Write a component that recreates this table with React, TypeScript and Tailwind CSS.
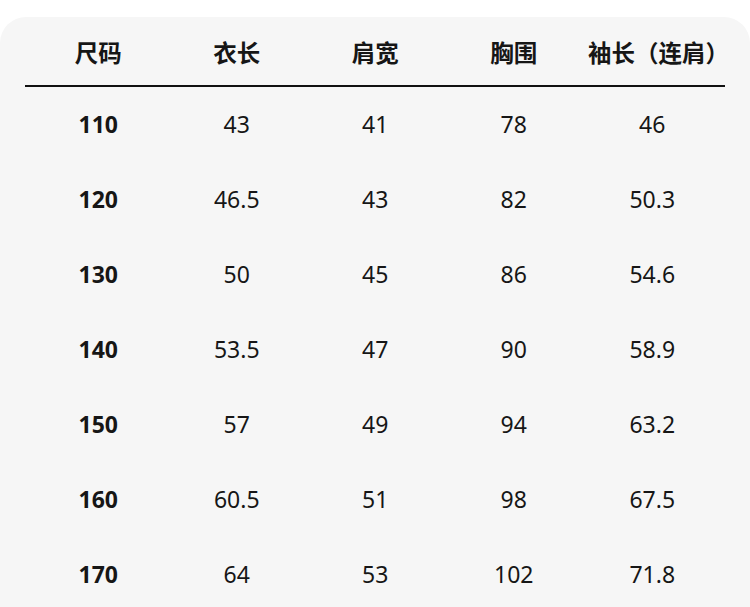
import React from "react";

const headers = ["尺码", "衣长", "肩宽", "胸围", "袖长（连肩）"];
const rows = [
  ["110", "43", "41", "78", "46"],
  ["120", "46.5", "43", "82", "50.3"],
  ["130", "50", "45", "86", "54.6"],
  ["140", "53.5", "47", "90", "58.9"],
  ["150", "57", "49", "94", "63.2"],
  ["160", "60.5", "51", "98", "67.5"],
  ["170", "64", "53", "102", "71.8"],
];

export default function App() {
  return (
    <div
      className="w-[750px] h-[607px] bg-white overflow-hidden text-[#161616]"
      style={{ fontFamily: '"Noto Sans", "Noto Sans CJK SC", sans-serif' }}
    >
      <div className="mt-[17px] h-[600px] rounded-t-[26px] bg-[#f6f6f6]">
        <div className="grid grid-cols-[repeat(5,138.5px)] pl-[29px] h-[68px] pt-[5px] items-center">
          {headers.map((h, i) => (
            <div
              key={h}
              className={
                "text-center text-[23.5px] font-bold leading-none whitespace-nowrap " +
                (i === 4 ? "pl-[5px]" : "")
              }
            >
              {h}
            </div>
          ))}
        </div>
        <div className="mx-[25px] h-[2px] bg-[#111]" />
        <div>
          {rows.map((r) => (
            <div
              key={r[0]}
              className="grid grid-cols-[repeat(5,138.5px)] pl-[29px] h-[75px] items-center"
            >
              {r.map((c, i) => (
                <div
                  key={i}
                  className={
                    "text-center text-[23px] leading-none " +
                    (i === 0 ? "font-bold" : "font-normal")
                  }
                >
                  {c}
                </div>
              ))}
            </div>
          ))}
        </div>
      </div>
    </div>
  );
}
